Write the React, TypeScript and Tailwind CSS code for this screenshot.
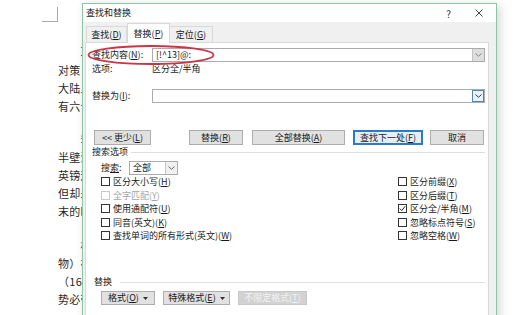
import React from 'react'

const Chevron = ({ color = '#666' }: { color?: string }) => (
  <svg width="7" height="4" viewBox="0 0 7 4">
    <path d="M0.5 0.5 L3.5 3.3 L6.5 0.5" stroke={color} strokeWidth="1" fill="none" />
  </svg>
)

const Caret = () => (
  <svg width="5" height="3" viewBox="0 0 5 3" className="ml-[4px]">
    <path d="M0 0 L5 0 L2.5 3 Z" fill="#333" />
  </svg>
)

function Key({ label, k, tail }: { label: string; k: string; tail?: string }) {
  return (
    <>
      {label}(<span className="underline underline-offset-1">{k}</span>){tail}
    </>
  )
}

function Btn({ className, children, focus, disabled }: { className: string; children: React.ReactNode; focus?: boolean; disabled?: boolean }) {
  let look = 'bg-[#e1e1e1] border-[#adadad] text-[#1a1a1a]'
  if (focus) look = 'bg-[#e5eef6] border-[#2a7bc4] shadow-[inset_0_0_0_1px_#2a7bc4] text-[#1a1a1a]'
  if (disabled) look = 'bg-[#d2d2d2] border-[#c8c8c8] text-[#f3f3f3]'
  return (
    <div className={`h-full flex items-center justify-center border whitespace-nowrap ${look} ${className}`}>
      {children}
    </div>
  )
}

function Check({ children, checked, disabled }: { children: React.ReactNode; checked?: boolean; disabled?: boolean }) {
  return (
    <div className="h-[13.5px] flex items-center gap-[3px] whitespace-nowrap">
      <div className={`w-[9px] h-[9px] border bg-white flex items-center justify-center ${disabled ? 'border-[#c9c9c9]' : 'border-[#333]'}`}>
        {checked && (
          <svg width="7" height="7" viewBox="0 0 7 7">
            <path d="M0.8 3.6 L2.7 5.5 L6.3 1.2" stroke="#222" strokeWidth="1" fill="none" />
          </svg>
        )}
      </div>
      <span className={disabled ? 'text-[#a5a5a5]' : 'text-[#1a1a1a]'}>{children}</span>
    </div>
  )
}

// only the left edge of the page shows beside the dialog
const docParas = [
  ['　　文', '对策，', '大陆上', '有六个'],
  ['　　尖', '半壁江', '英镑逐', '但却未', '末的时'],
  ['　　相', '物）在', '（16', '势必带'],
]

export default function App() {
  return (
    <div className="relative w-[522px] h-[315px] overflow-hidden bg-white font-['Noto_Sans_CJK_SC','Microsoft_YaHei',sans-serif]">
      {/* Document page */}
      <div className="ml-[42px] mt-[7px] w-[16px] h-[15px] border-r border-b border-[#a9a9a9]" />
      <div className="ml-[58px] w-[24px] overflow-hidden text-[11px] text-[#2a2a2a] tracking-[0.3px]">
        {docParas.map((lines, i) => (
          <div key={i} className={i === 0 ? 'mt-[19px]' : i === 1 ? 'mt-[13px]' : 'mt-[16px]'}>
            {lines.map((l, j) => (
              <div key={j} className={`h-[18px] leading-[18px] whitespace-nowrap ${j === 1 && i < 2 ? 'mt-[2px]' : ''}`}>
                {l}
              </div>
            ))}
          </div>
        ))}
      </div>

      {/* Find and replace dialog */}
      <div className="absolute left-[82px] top-[3px] w-[415px] h-[340px] border border-[#8cc4a4] bg-[#f0f0f0] shadow-[3px_2px_9px_rgba(0,0,0,0.16)] text-[9px] text-[#1a1a1a]">
        <div className="h-[18px] bg-white flex items-center pl-[3px] pr-[13px]">
          <span>查找和替换</span>
          <span className="ml-auto text-[10px] text-[#333]">?</span>
          <svg width="8" height="8" viewBox="0 0 8 8" className="ml-[24px]">
            <path d="M0.5 0.5 L7.5 7.5 M7.5 0.5 L0.5 7.5" stroke="#333" strokeWidth="0.9" />
          </svg>
        </div>

        <div className="h-[20px] flex items-end pl-[3px]">
          <div className="w-[41px] h-[16px] border border-b-0 border-[#d9d9d9] flex items-center justify-center">
            <Key label="查找" k="D" />
          </div>
          <div className="relative z-10 w-[43px] h-[20px] -mb-[1px] bg-white border border-b-0 border-[#d9d9d9] flex items-center justify-center">
            <Key label="替换" k="P" />
          </div>
          <div className="w-[43px] h-[16px] border border-b-0 border-l-0 border-[#d9d9d9] flex items-center justify-center">
            <Key label="定位" k="G" />
          </div>
        </div>

        <div className="ml-[2px] w-[404px] h-[300px] bg-white border border-[#d9d9d9]">
          <div className="mt-[5px] h-[14px] flex items-center">
            <div className="w-[66px] pl-[6px] whitespace-nowrap">
              <Key label="查找内容" k="N" tail=":" />
            </div>
            <div className="w-[333px] h-full border border-[#ababab] flex items-center">
              <span className="pl-[3px] flex-1">[!^13]@:</span>
              <div className="w-[12px] h-full bg-[#dedede] border-l border-[#c4c4c4] flex items-center justify-center">
                <Chevron color="#888" />
              </div>
            </div>
          </div>
          <div className="h-[14px] flex items-center">
            <div className="w-[66px] pl-[6px]">选项:</div>
            <div>区分全/半角</div>
          </div>

          <div className="mt-[13px] h-[14px] flex items-center">
            <div className="w-[66px] pl-[6px] whitespace-nowrap">
              <Key label="替换为" k="I" tail=":" />
            </div>
            <div className="w-[333px] h-full border border-[#ababab] flex items-center justify-end">
              <div className="w-[12px] h-full bg-[#eaf2f9] border border-[#4a88b8] flex items-center justify-center">
                <Chevron color="#333" />
              </div>
            </div>
          </div>

          <div className="mt-[27px] h-[15px] flex">
            <Btn className="ml-[8px] w-[57px]">
              &lt;&lt; 更少(<span className="underline underline-offset-1">L</span>)
            </Btn>
            <Btn className="ml-[38px] w-[54px]"><Key label="替换" k="R" /></Btn>
            <Btn className="ml-[9px] w-[93px]"><Key label="全部替换" k="A" /></Btn>
            <Btn className="ml-[8px] w-[70px]" focus><Key label="查找下一处" k="F" /></Btn>
            <Btn className="ml-[7px] w-[54px]">取消</Btn>
          </div>

          <div className="mt-[1px] h-[12px] flex items-center pr-[3px]">
            <span className="pl-[6px]">搜索选项</span>
            <div className="flex-1 h-px bg-[#dedede] ml-[3px]" />
          </div>

          <div className="mt-[3px] h-[14px] flex items-center pl-[15px]">
            <span className="w-[28px]">搜<span className="underline underline-offset-1">索</span>:</span>
            <div className="w-[49px] h-full border border-[#ababab] flex items-center">
              <span className="pl-[3px] flex-1">全部</span>
              <div className="w-[12px] h-full bg-[#f0f0f0] border-l border-[#c8c8c8] flex items-center justify-center">
                <Chevron />
              </div>
            </div>
          </div>

          <div className="flex">
            <div className="ml-[15px] w-[297px]">
              <Check><Key label="区分大小写" k="H" /></Check>
              <Check disabled><Key label="全字匹配" k="Y" /></Check>
              <Check><Key label="使用通配符" k="U" /></Check>
              <Check><Key label="同音(英文)" k="K" /></Check>
              <Check><Key label="查找单词的所有形式(英文)" k="W" /></Check>
            </div>
            <div>
              <Check><Key label="区分前缀" k="X" /></Check>
              <Check><Key label="区分后缀" k="T" /></Check>
              <Check checked><Key label="区分全/半角" k="M" /></Check>
              <Check><Key label="忽略标点符号" k="S" /></Check>
              <Check><Key label="忽略空格" k="W" /></Check>
            </div>
          </div>

          <div className="mt-[33.5px] h-[12px] flex items-center pr-[3px]">
            <span className="pl-[8px]">替换</span>
            <div className="flex-1 h-px bg-[#dedede] ml-[8px]" />
          </div>

          <div className="mt-[3px] h-[14px] flex pl-[15px]">
            <Btn className="w-[54px]"><Key label="格式" k="O" /><Caret /></Btn>
            <Btn className="ml-[8px] w-[67px]"><Key label="特殊格式" k="E" /><Caret /></Btn>
            <Btn className="ml-[8px] w-[69px]" disabled><Key label="不限定格式" k="T" /></Btn>
          </div>
        </div>
      </div>

      {/* Red annotation ellipse */}
      <svg className="absolute left-[86px] top-[44px]" width="130" height="22" viewBox="0 0 130 22">
        <ellipse cx="65" cy="11" rx="62.5" ry="9" stroke="#cc3344" strokeWidth="1.8" fill="none" />
      </svg>
    </div>
  )
}
